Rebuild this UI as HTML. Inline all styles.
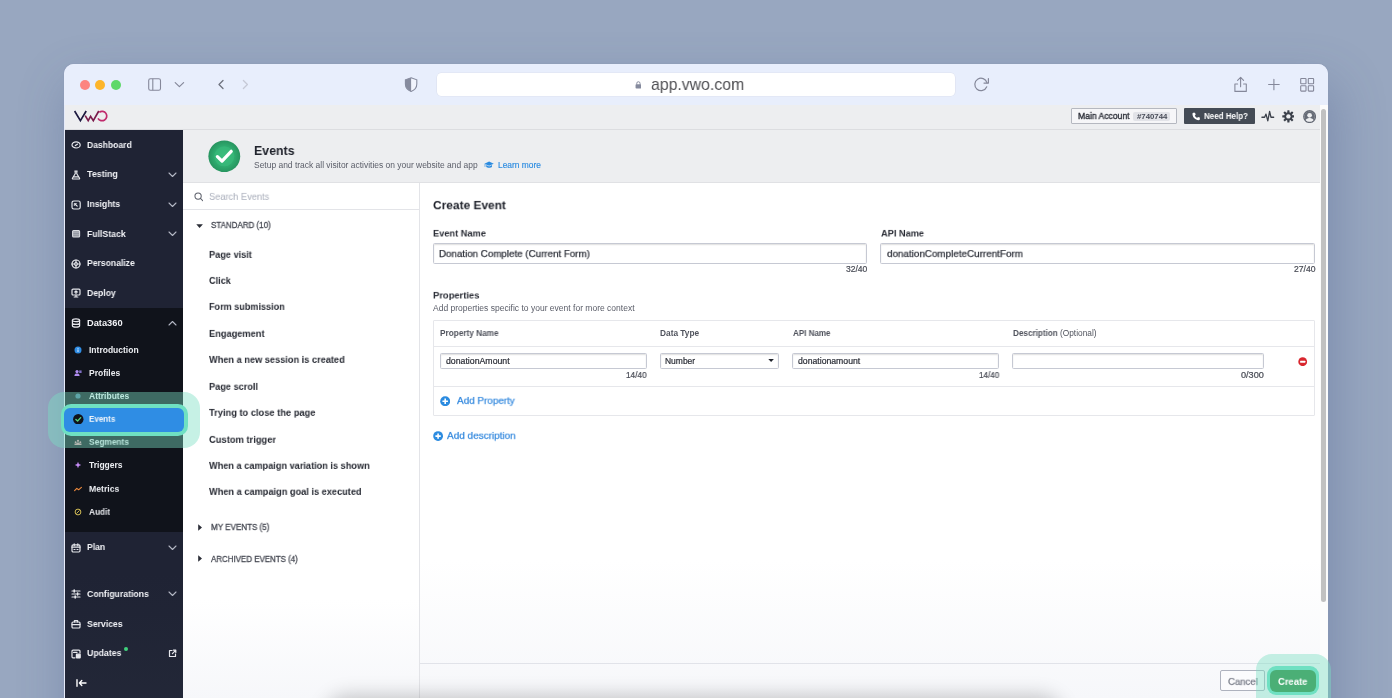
<!DOCTYPE html>
<html>
<head>
<meta charset="utf-8">
<style>
*{box-sizing:border-box;margin:0;padding:0}
html,body{width:1392px;height:698px;overflow:hidden}
body{font-family:"Liberation Sans",sans-serif;background:#98a7c0;position:relative;color:#22252f}
.a{position:absolute}
.t{position:absolute;white-space:nowrap;line-height:1.2;transform-origin:0 0;will-change:transform}
#win{position:absolute;left:64px;top:64px;width:1264px;height:700px;border-radius:10px 10px 0 0;background:#e6ebfa;overflow:hidden;box-shadow:0 0 0 1px rgba(140,150,180,.18),6px 22px 50px 2px rgba(60,80,130,.30)}
.tl{position:absolute;width:11px;height:11px;border-radius:50%}
.box{position:absolute;border:1px solid #c6c9d3;border-radius:1.5px;background:#fff;box-shadow:inset 0 1px 1.5px rgba(0,0,0,.13)}
.ln{position:absolute;background:#e3e4e8}
</style>
</head>
<body>
<div id="win"><div class="a" style="left:0.00px;top:0.00px;width:1264.00px;height:41.00px;background:#e8eefc"></div>
<div class="a" style="left:15.65px;top:15.70px;width:10.30px;height:10.30px;background:#fc8480;border-radius:50%"></div>
<div class="a" style="left:31.15px;top:15.70px;width:10.30px;height:10.30px;background:#fdb52a;border-radius:50%"></div>
<div class="a" style="left:46.75px;top:15.70px;width:10.30px;height:10.30px;background:#5dd868;border-radius:50%"></div>
<svg class="a" style="left:82.00px;top:13.00px" width="16.00" height="15.00" viewBox="0 0 16 15" fill="none" stroke="#85889a" stroke-width="1.1"><rect x="2.7" y="1.8" width="11.8" height="11.5" rx="1.8"/><line x1="6.8" y1="1.8" x2="6.8" y2="13.3"/></svg>
<svg class="a" style="left:109.00px;top:17.00px" width="12.00" height="8.00" viewBox="0 0 12 8" fill="none" stroke="#85889a" stroke-width="1.2" stroke-linecap="round" stroke-linejoin="round"><path d="M2.2 1.6 L6.4 5.6 L10.6 1.6"/></svg>
<svg class="a" style="left:152.00px;top:14.00px" width="8.00" height="13.00" viewBox="0 0 8 13" fill="none" stroke="#6e717d" stroke-width="1.3" stroke-linecap="round" stroke-linejoin="round"><path d="M7 2.5 L3 6.5 L7 10.5"/></svg>
<svg class="a" style="left:178.00px;top:14.00px" width="8.00" height="13.00" viewBox="0 0 8 13" fill="none" stroke="#c6c9d6" stroke-width="1.3" stroke-linecap="round" stroke-linejoin="round"><path d="M1.4 2.5 L5.4 6.5 L1.4 10.5"/></svg>
<svg class="a" style="left:339.00px;top:12.00px" width="16.00" height="17.00" viewBox="0 0 16 17" ><path d="M8.1 1.8 L13.8 3.8 V8 C13.8 11.6 11.2 14.2 8.1 15.4 C5 14.2 2.4 11.6 2.4 8 V3.8 Z" fill="#f1f4fd" stroke="#868b9e" stroke-width="1.1"/><path d="M8.1 1.8 L2.4 3.8 V8 C2.4 11.6 5 14.2 8.1 15.4 Z" fill="#868b9e"/></svg>
<div class="a" style="left:373.00px;top:8.70px;width:517.50px;height:23.40px;background:#fff;border-radius:4.5px;box-shadow:0 0 0 .6px #dde1ef"></div>
<svg class="a" style="left:570.70px;top:17.30px" width="6.80" height="7.70" viewBox="0 0 8 9.5" ><rect x="0.5" y="4" width="7" height="5.2" rx="1" fill="#858a9d"/><path d="M2 4.5 V2.9 A2 2 0 0 1 6 2.9 V4.5" fill="none" stroke="#858a9d" stroke-width="1.2"/></svg>
<svg class="a" style="left:908.00px;top:11.00px" width="19.00" height="19.00" viewBox="0 0 19 19" fill="none" stroke="#85889a" stroke-width="1.2" stroke-linecap="round" stroke-linejoin="round"><path d="M14.75 11.8 A6.2 6.2 0 1 1 15 7.8"/><path d="M16.4 3.5 V8.1 H12"/></svg>
<svg class="a" style="left:1169.00px;top:11.00px" width="16.00" height="19.00" viewBox="0 0 16 19" fill="none" stroke="#85889a" stroke-width="1.1" stroke-linecap="round" stroke-linejoin="round"><path d="M4.6 9 H1.9 V16.4 H13.3 V9 H10.6"/><path d="M7.6 11.8 V2.6"/><path d="M4.6 5.4 L7.6 2.4 L10.6 5.4"/></svg>
<svg class="a" style="left:1204.00px;top:14.00px" width="13.00" height="13.00" viewBox="0 0 13 13" fill="none" stroke="#85889a" stroke-width="1.1" stroke-linecap="round"><path d="M5.9 1.3 V11.8 M0.6 6.5 H11.2"/></svg>
<svg class="a" style="left:1236.00px;top:13.00px" width="15.00" height="15.00" viewBox="0 0 15 15" fill="none" stroke="#85889a" stroke-width="1.1"><rect x=".7" y="1.5" width="5.3" height="5.3" rx=".6"/><rect x="8.3" y="1.5" width="5.3" height="5.3" rx=".6"/><rect x=".7" y="8.8" width="5.3" height="5.3" rx=".6"/><rect x="8.3" y="8.8" width="5.3" height="5.3" rx=".6"/></svg>
<div class="a" style="left:1.00px;top:41.00px;width:1255.00px;height:24.60px;background:#edeef0;border-bottom:1px solid #dcdde0"></div>
<svg class="a" style="left:9.00px;top:46.00px" width="40.00" height="14.00" viewBox="0 0 40 14" fill="none" stroke-width="1.7"><path d="M1.6 1 L7.4 10.6 L13.2 1" stroke="#1e1a40"/><path d="M12.2 5.6 L15.2 10.6 L17.6 6.3 L20.3 10.6 L25.8 1" stroke="#7a1c4c"/><path d="M26.3 2.2 A4.7 4.7 0 1 1 25 8.4" stroke="#c02a6c"/></svg>
<div class="a" style="left:1006.70px;top:44.30px;width:106.60px;height:15.60px;border:1px solid #b5b8c0;background:#f6f6f8;border-radius:1px"></div>
<div class="a" style="left:1069.30px;top:47.60px;width:36.30px;height:9.30px;background:#e2e3e8;border-radius:2px"></div>
<div class="a" style="left:1120.10px;top:44.30px;width:70.80px;height:15.60px;background:#444b55;border-radius:1px"></div>
<svg class="a" style="left:1127.50px;top:48.00px" width="8.30" height="9.00" viewBox="0 0 9 9" ><path d="M1.8 0.5 L3.3 0.5 L4 2.6 L3 3.4 C3.5 4.6 4.4 5.5 5.6 6 L6.4 5 L8.5 5.7 V7.2 C8.5 8 7.9 8.5 7.2 8.5 C3.5 8.3 0.7 5.5 0.5 1.8 C0.5 1.1 1 0.5 1.8 0.5 Z" fill="#fff"/></svg>
<svg class="a" style="left:1197.30px;top:46.20px" width="13.60" height="12.70" viewBox="0 0 15 14" fill="none" stroke="#3c414b" stroke-width="1.4" stroke-linejoin="round" stroke-linecap="round"><path d="M1 8 H4 L5.5 4.5 L7.5 12 L9.5 1.5 L11 8 H14"/></svg>
<svg class="a" style="left:1217.50px;top:46.30px" width="12.80" height="12.80" viewBox="0 0 14 14" ><g fill="#3c414b"><circle cx="7" cy="7" r="4.6"/><rect x="5.8" y="0.3" width="2.4" height="13.4" rx=".4"/><rect x="5.8" y="0.3" width="2.4" height="13.4" rx=".4" transform="rotate(45 7 7)"/><rect x="5.8" y="0.3" width="2.4" height="13.4" rx=".4" transform="rotate(90 7 7)"/><rect x="5.8" y="0.3" width="2.4" height="13.4" rx=".4" transform="rotate(135 7 7)"/></g><circle cx="7" cy="7" r="2.4" fill="#edeef0"/></svg>
<svg class="a" style="left:1238.90px;top:45.70px" width="13.20" height="13.20" viewBox="0 0 14 14" ><circle cx="7" cy="7" r="6.2" fill="#edeef0" stroke="#666b76" stroke-width="1.4"/><clipPath id="uc"><circle cx="7" cy="7" r="5.6"/></clipPath><g clip-path="url(#uc)"><rect x="0" y="0" width="14" height="14" fill="#666b76"/><circle cx="7" cy="5.6" r="2.5" fill="#edeef0"/><path d="M2.5 13 C2.5 9.5 5 8.6 7 8.6 C9 8.6 11.5 9.5 11.5 13 Z" fill="#edeef0"/></g></svg>
<div class="a" style="left:1255.60px;top:41.00px;width:8.40px;height:659.00px;background:#fcfcfc"></div>
<div class="a" style="left:1256.50px;top:44.60px;width:5.50px;height:493.40px;background:#c1c1c1;border-radius:3px"></div>
<div class="a" style="left:1.00px;top:65.60px;width:117.60px;height:634.40px;background:linear-gradient(180deg,#1f2334 0%,#1f2334 70%,#242939 100%)"></div>
<div class="a" style="left:1.00px;top:244.10px;width:117.60px;height:224.30px;background:#10131b"></div>
<svg class="a" style="left:6.80px;top:75.90px" width="10.00" height="10.00" viewBox="0 0 10 10" fill="none" stroke="#e6e7ec" stroke-width="1.2" stroke-linejoin="round" stroke-linecap="round"><ellipse cx="5.1" cy="4.9" rx="4.1" ry="3.1"/><path d="M4.3 5.5 L6.4 4.2" stroke-width="1.3"/></svg>
<svg class="a" style="left:6.80px;top:105.70px" width="10.00" height="10.00" viewBox="0 0 10 10" fill="none" stroke="#e6e7ec" stroke-width="1.2" stroke-linejoin="round" stroke-linecap="round"><path d="M3.8 1 H6.2 M4.2 1 V3.8 L1.4 8.2 A.6 .6 0 0 0 1.9 9 H8.1 A.6 .6 0 0 0 8.6 8.2 L5.8 3.8 V1"/><path d="M2.6 6.8 H7.4" /></svg>
<svg class="a" style="left:103.50px;top:107.80px" width="9.00" height="6.00" viewBox="0 0 9 6" fill="none" stroke="#b3b7c4" stroke-width="1.1" stroke-linecap="round" stroke-linejoin="round"><path d="M1 1 L4.5 4.5 L8 1"/></svg>
<svg class="a" style="left:6.80px;top:135.60px" width="10.00" height="10.00" viewBox="0 0 10 10" fill="none" stroke="#e6e7ec" stroke-width="1.2" stroke-linejoin="round" stroke-linecap="round"><rect x="1" y="1" width="8.2" height="8" rx="1.8"/><path d="M3.8 3.8 L6.2 6.2" /><path d="M3.5 3.5 H5.7 L3.5 5.7 Z" fill="#e6e7ec" stroke-width=".5"/></svg>
<svg class="a" style="left:103.50px;top:137.70px" width="9.00" height="6.00" viewBox="0 0 9 6" fill="none" stroke="#b3b7c4" stroke-width="1.1" stroke-linecap="round" stroke-linejoin="round"><path d="M1 1 L4.5 4.5 L8 1"/></svg>
<svg class="a" style="left:6.80px;top:165.10px" width="10.00" height="10.00" viewBox="0 0 10 10" fill="none" stroke="#e6e7ec" stroke-width="1.2" stroke-linejoin="round" stroke-linecap="round"><rect x="1.6" y="1.6" width="7" height="6.4" rx="1" fill="#8f929d" stroke="#dcdde3" stroke-width="1.1"/><path d="M1.8 3.7 H8.4 M1.8 5.8 H8.4" stroke="#c9cbd3" stroke-width=".6"/></svg>
<svg class="a" style="left:103.50px;top:167.20px" width="9.00" height="6.00" viewBox="0 0 9 6" fill="none" stroke="#b3b7c4" stroke-width="1.1" stroke-linecap="round" stroke-linejoin="round"><path d="M1 1 L4.5 4.5 L8 1"/></svg>
<svg class="a" style="left:6.80px;top:194.60px" width="10.00" height="10.00" viewBox="0 0 10 10" fill="none" stroke="#e6e7ec" stroke-width="1.2" stroke-linejoin="round" stroke-linecap="round"><circle cx="5" cy="5" r="4"/><circle cx="5" cy="5" r="1.3"/><path d="M5 1 V3.5 M5 6.5 V9 M1 5 H3.5 M6.5 5 H9"/></svg>
<svg class="a" style="left:6.80px;top:224.30px" width="10.00" height="10.00" viewBox="0 0 10 10" fill="none" stroke="#e6e7ec" stroke-width="1.2" stroke-linejoin="round" stroke-linecap="round"><rect x="1" y="1.2" width="8" height="5.8" rx="1"/><path d="M5 7 V9 M3.2 9 H6.8 M5 5.4 V3 M3.8 4 L5 2.8 L6.2 4"/></svg>
<svg class="a" style="left:6.80px;top:254.10px" width="10.00" height="10.00" viewBox="0 0 10 10" fill="none" stroke="#e6e7ec" stroke-width="1.2" stroke-linejoin="round" stroke-linecap="round"><ellipse cx="5" cy="2.3" rx="3.6" ry="1.4"/><path d="M1.4 2.3 V7.7 A3.6 1.4 0 0 0 8.6 7.7 V2.3 M1.4 5 A3.6 1.4 0 0 0 8.6 5"/></svg>
<svg class="a" style="left:103.50px;top:256.00px" width="9.00" height="6.00" viewBox="0 0 9 6" fill="none" stroke="#b3b7c4" stroke-width="1.1" stroke-linecap="round" stroke-linejoin="round"><path d="M1 5 L4.5 1.5 L8 5"/></svg>
<svg class="a" style="left:6.80px;top:478.70px" width="10.00" height="10.00" viewBox="0 0 10 10" fill="none" stroke="#e6e7ec" stroke-width="1.2" stroke-linejoin="round" stroke-linecap="round"><rect x="1" y="1.8" width="8" height="7.2" rx="1.2"/><path d="M1 4.2 H9 M3.2 0.8 V2.6 M6.8 0.8 V2.6 M3 6.5 H4 M6 6.5 H7"/></svg>
<svg class="a" style="left:103.50px;top:480.80px" width="9.00" height="6.00" viewBox="0 0 9 6" fill="none" stroke="#b3b7c4" stroke-width="1.1" stroke-linecap="round" stroke-linejoin="round"><path d="M1 1 L4.5 4.5 L8 1"/></svg>
<svg class="a" style="left:6.80px;top:525.20px" width="10.00" height="10.00" viewBox="0 0 10 10" fill="none" stroke="#e6e7ec" stroke-width="1.2" stroke-linejoin="round" stroke-linecap="round"><path d="M1 2 H9 M1 5 H9 M1 8 H9"/><path d="M3.2 1 V3 M6.6 4 V6 M4.2 7 V9" stroke-width="1.6"/></svg>
<svg class="a" style="left:103.50px;top:527.30px" width="9.00" height="6.00" viewBox="0 0 9 6" fill="none" stroke="#b3b7c4" stroke-width="1.1" stroke-linecap="round" stroke-linejoin="round"><path d="M1 1 L4.5 4.5 L8 1"/></svg>
<svg class="a" style="left:6.80px;top:554.90px" width="10.00" height="10.00" viewBox="0 0 10 10" fill="none" stroke="#e6e7ec" stroke-width="1.2" stroke-linejoin="round" stroke-linecap="round"><rect x="1" y="3" width="8" height="6" rx="1"/><path d="M3.4 3 V1.6 H6.6 V3 M1 5.6 H9"/></svg>
<svg class="a" style="left:6.80px;top:584.60px" width="10.00" height="10.00" viewBox="0 0 10 10" fill="none" stroke="#e6e7ec" stroke-width="1.2" stroke-linejoin="round" stroke-linecap="round"><path d="M9 4 V2.2 A1 1 0 0 0 8 1.2 H2 A1 1 0 0 0 1 2.2 V7.8 A1 1 0 0 0 2 8.8 H4"/><rect x="5.4" y="5.2" width="3.8" height="3.8" rx=".4" fill="#e6e7ec"/><path d="M2.6 3.4 H6"/></svg>
<div class="a" style="left:59.90px;top:583.30px;width:4.00px;height:4.00px;background:#3fd17c;border-radius:50%"></div>
<svg class="a" style="left:103.50px;top:585.40px" width="9.00" height="9.00" viewBox="0 0 9 9" fill="none" stroke="#e6e7ec" stroke-width="1.2" stroke-linecap="round" stroke-linejoin="round"><path d="M4 1.5 H1.5 V7.5 H7.5 V5"/><path d="M5.4 1.2 H7.8 V3.6 M7.6 1.4 L4.4 4.6"/></svg>
<svg class="a" style="left:11.50px;top:615.30px" width="11.00" height="8.00" viewBox="0 0 11 8" fill="none" stroke="#fff" stroke-width="1.4" stroke-linecap="round" stroke-linejoin="round"><path d="M1 .8 V7.2 M10 4 H3.6 M5.8 1.6 L3.4 4 L5.8 6.4"/></svg>
<svg class="a" style="left:10.40px;top:281.70px" width="8.00" height="8.00" viewBox="0 0 8 8" ><circle cx="4" cy="4" r="3.5" fill="#2f8de4"/><rect x="3.5" y="3.4" width="1" height="2.6" fill="#dbeafb"/><rect x="3.5" y="1.9" width="1" height="1" fill="#dbeafb"/></svg>
<svg class="a" style="left:10.40px;top:304.90px" width="8.00" height="8.00" viewBox="0 0 8 8" ><circle cx="3" cy="2.6" r="1.6" fill="#b08cf0"/><path d="M.4 7 C.4 5.2 1.6 4.6 3 4.6 C4.4 4.6 5.6 5.2 5.6 7 Z" fill="#b08cf0"/><rect x="5.2" y="1.4" width="2.4" height="2.6" fill="#7f6fc4"/></svg>
<svg class="a" style="left:10.40px;top:328.10px" width="8.00" height="8.00" viewBox="0 0 8 8" ><circle cx="4" cy="4" r="2.6" fill="#5b9fc0" opacity=".75"/></svg>
<svg class="a" style="left:10.40px;top:374.20px" width="8.00" height="8.00" viewBox="0 0 8 8" ><path d="M.5 7 V5.6 H2.5 V4.4 H5.5 V5.6 H7.5 V7 Z" fill="#dc96a2"/><circle cx="1.6" cy="4.2" r=".9" fill="#dc96a2"/><circle cx="4" cy="2.8" r="1.1" fill="#dc96a2"/><circle cx="6.4" cy="4.2" r=".9" fill="#dc96a2"/></svg>
<svg class="a" style="left:10.40px;top:396.90px" width="8.00" height="8.00" viewBox="0 0 8 8" ><path d="M4 .8 L4.9 3.1 L7.2 4 L4.9 4.9 L4 7.2 L3.1 4.9 L.8 4 L3.1 3.1 Z" fill="#c48bf4"/></svg>
<svg class="a" style="left:10.40px;top:420.60px" width="8.00" height="8.00" viewBox="0 0 8 8" ><path d="M.6 5.6 L2.8 3.4 L4.6 4.8 L7.4 2.4" fill="none" stroke="#f08a3c" stroke-width="1.1" stroke-linecap="round" stroke-linejoin="round"/></svg>
<svg class="a" style="left:10.40px;top:443.80px" width="8.00" height="8.00" viewBox="0 0 8 8" ><circle cx="4" cy="4" r="2.9" fill="none" stroke="#d2bc55" stroke-width="1"/><path d="M2.4 5.6 L5.6 2.4" stroke="#d2bc55" stroke-width=".9"/></svg>
<div class="a" style="left:118.60px;top:66.00px;width:1137.00px;height:52.60px;background:#edeef0;border-bottom:1px solid #e0e1e4"></div>
<svg class="a" style="left:144.30px;top:75.60px" width="32.60" height="32.60" viewBox="0 0 34 34" ><defs><radialGradient id="eg" cx="50%" cy="50%" r="50%"><stop offset="0" stop-color="#39bd7c"/><stop offset=".55" stop-color="#30b072"/><stop offset="1" stop-color="#27945f"/></radialGradient></defs><circle cx="17" cy="17" r="16.6" fill="url(#eg)"/><circle cx="17" cy="17" r="10.5" fill="#3cbd7d" opacity=".5"/><path d="M9.8 17.4 L14.6 22 L24.2 11.8" fill="none" stroke="#fff" stroke-width="3.4" stroke-linejoin="round" stroke-linecap="round"/></svg>
<svg class="a" style="left:419.80px;top:96.90px" width="10.20" height="7.70" viewBox="0 0 11 8.4" ><path d="M5.5 .6 L10.6 2.9 L5.5 5.2 L.4 2.9 Z" fill="#2b8be0"/><path d="M2.4 4.4 V6.6 C3.4 7.8 7.6 7.8 8.6 6.6 V4.4 L5.5 5.9 Z" fill="#2b8be0"/><path d="M1 3.2 V6.4" stroke="#2b8be0" stroke-width=".7"/></svg>
<div class="a" style="left:118.60px;top:118.60px;width:1137.00px;height:581.40px;background:#fff"></div>
<div class="a" style="left:354.60px;top:118.60px;width:1.00px;height:581.40px;background:#e3e4e8"></div>
<div class="a" style="left:118.60px;top:145.20px;width:236.00px;height:1.00px;background:#e3e4e8"></div>
<svg class="a" style="left:129.70px;top:128.00px" width="9.50" height="9.50" viewBox="0 0 10 10" fill="none" stroke="#5d606b" stroke-width="1.1" stroke-linecap="round"><circle cx="4.3" cy="4.3" r="3.3"/><path d="M6.8 6.8 L9.2 9.2"/></svg>
<svg class="a" style="left:132.20px;top:159.60px" width="7.20" height="4.10" viewBox="0 0 8 4.6" ><path d="M.3 .2 H7.7 L4 4.4 Z" fill="#2a2d36"/></svg>
<svg class="a" style="left:133.50px;top:459.80px" width="4.20" height="7.00" viewBox="0 0 4.2 7" ><path d="M.2 .2 V6.8 L4 3.5 Z" fill="#2a2d36"/></svg>
<svg class="a" style="left:133.50px;top:491.20px" width="4.20" height="7.00" viewBox="0 0 4.2 7" ><path d="M.2 .2 V6.8 L4 3.5 Z" fill="#2a2d36"/></svg>
<div class="a" style="left:355.60px;top:496.00px;width:900.00px;height:140.00px;background:linear-gradient(180deg,rgba(246,247,250,0) 0%,#f6f7fa 100%)"></div>
<div class="a" style="left:118.60px;top:536.00px;width:236.00px;height:100.00px;background:linear-gradient(180deg,rgba(246,247,250,0) 0%,#f6f7fa 100%)"></div>
<div class="box" style="left:368.60px;top:178.50px;width:434.30px;height:21.00px;"></div>
<div class="box" style="left:816.10px;top:178.50px;width:434.80px;height:21.00px;"></div>
<div class="a" style="left:368.60px;top:256.00px;width:882.30px;height:95.60px;border:1px solid #e6e7eb;border-radius:1px"></div>
<div class="a" style="left:368.60px;top:282.00px;width:882.30px;height:1.00px;background:#e6e7eb"></div>
<div class="a" style="left:368.60px;top:322.40px;width:882.30px;height:1.00px;background:#e6e7eb"></div>
<div class="box" style="left:376.00px;top:289.30px;width:206.90px;height:15.40px;"></div>
<div class="box" style="left:596.10px;top:289.30px;width:118.50px;height:15.40px;"></div>
<svg class="a" style="left:704.00px;top:295.20px" width="6.20" height="3.00" viewBox="0 0 7 3.6" ><path d="M.2 .1 H6.8 L3.5 3.5 Z" fill="#1f222b"/></svg>
<div class="box" style="left:728.20px;top:289.30px;width:206.80px;height:15.40px;"></div>
<div class="box" style="left:948.40px;top:289.30px;width:251.40px;height:15.40px;"></div>
<svg class="a" style="left:1234.40px;top:292.50px" width="9.40" height="9.40" viewBox="0 0 10 10" ><circle cx="5" cy="5" r="4.7" fill="#d9262e"/><rect x="2.2" y="4" width="5.6" height="2" rx=".4" fill="#fff"/></svg>
<svg class="a" style="left:376.10px;top:331.80px" width="10.40" height="10.40" viewBox="0 0 11 11" ><circle cx="5.5" cy="5.5" r="5.3" fill="#2b8be0"/><path d="M5.5 2.6 V8.4 M2.6 5.5 H8.4" stroke="#fff" stroke-width="1.7"/></svg>
<svg class="a" style="left:368.90px;top:366.70px" width="10.20" height="10.20" viewBox="0 0 11 11" ><circle cx="5.5" cy="5.5" r="5.3" fill="#2b8be0"/><path d="M5.5 2.6 V8.4 M2.6 5.5 H8.4" stroke="#fff" stroke-width="1.7"/></svg>
<div class="a" style="left:355.60px;top:599.00px;width:900.00px;height:1.00px;background:#e1e3e9"></div>
<div class="a" style="left:1156.20px;top:606.00px;width:44.50px;height:21.30px;border:1px solid #aeb2be;border-radius:2px;background:#fbfbfd"></div>
<div class="a" style="left:274.00px;top:644.00px;width:712.00px;height:22.00px;box-shadow:0 0 20px 12px rgba(0,0,0,.22);border-radius:10px"></div>
<div id="t0" class="t" style="left:587.05px;top:11.40px;font-size:17px;font-weight:normal;color:#505054;transform:scale(0.9312,1);">app.vwo.com</div>
<div id="t1" class="t" style="left:1013.97px;top:47.40px;font-size:8.8px;font-weight:normal;color:#2c2f38;transform:scale(0.9761,1);-webkit-text-stroke:.35px #2c2f38;">Main Account</div>
<div id="t2" class="t" style="left:1072.58px;top:49.00px;font-size:7.2px;font-weight:bold;color:#474b57;transform:scale(1.0859,1);">#740744</div>
<div id="t3" class="t" style="left:1139.87px;top:47.40px;font-size:8.8px;font-weight:bold;color:#fff;transform:scale(0.9080,1);">Need Help?</div>
<div id="t4" class="t" style="left:22.67px;top:75.68px;font-size:9.2px;font-weight:bold;color:#f2f3f7;transform:scale(0.9306,1.04);">Dashboard</div>
<div id="t5" class="t" style="left:22.67px;top:105.48px;font-size:9.2px;font-weight:bold;color:#f2f3f7;transform:scale(0.9677,1.04);">Testing</div>
<div id="t6" class="t" style="left:22.67px;top:135.38px;font-size:9.2px;font-weight:bold;color:#f2f3f7;transform:scale(0.9442,1.04);">Insights</div>
<div id="t7" class="t" style="left:22.67px;top:164.88px;font-size:9.2px;font-weight:bold;color:#f2f3f7;transform:scale(0.9464,1.04);">FullStack</div>
<div id="t8" class="t" style="left:22.67px;top:194.38px;font-size:9.2px;font-weight:bold;color:#f2f3f7;transform:scale(0.9352,1.04);">Personalize</div>
<div id="t9" class="t" style="left:22.67px;top:224.08px;font-size:9.2px;font-weight:bold;color:#f2f3f7;transform:scale(0.9389,1.04);">Deploy</div>
<div id="t10" class="t" style="left:22.67px;top:253.88px;font-size:9.2px;font-weight:bold;color:#f2f3f7;transform:scale(1.0090,1.04);">Data360</div>
<div id="t11" class="t" style="left:22.67px;top:478.48px;font-size:9.2px;font-weight:bold;color:#f2f3f7;transform:scale(0.9310,1.04);">Plan</div>
<div id="t12" class="t" style="left:22.67px;top:524.98px;font-size:9.2px;font-weight:bold;color:#f2f3f7;transform:scale(0.9470,1.04);">Configurations</div>
<div id="t13" class="t" style="left:22.67px;top:554.68px;font-size:9.2px;font-weight:bold;color:#f2f3f7;transform:scale(0.9406,1.04);">Services</div>
<div id="t14" class="t" style="left:22.67px;top:584.38px;font-size:9.2px;font-weight:bold;color:#f2f3f7;transform:scale(0.9481,1.04);">Updates</div>
<div id="t15" class="t" style="left:24.87px;top:280.84px;font-size:8.5px;font-weight:bold;color:#eceef2;transform:scale(0.9952,0.97);">Introduction</div>
<div id="t16" class="t" style="left:24.87px;top:304.04px;font-size:8.5px;font-weight:bold;color:#eceef2;transform:scale(0.9889,0.97);">Profiles</div>
<div id="t17" class="t" style="left:24.87px;top:327.24px;font-size:8.5px;font-weight:bold;color:#eceef2;transform:scale(0.9950,0.97);">Attributes</div>
<div id="t18" class="t" style="left:24.87px;top:373.34px;font-size:8.5px;font-weight:bold;color:#eceef2;transform:scale(0.9831,0.97);">Segments</div>
<div id="t19" class="t" style="left:25.27px;top:396.04px;font-size:8.5px;font-weight:bold;color:#eceef2;transform:scale(0.9879,0.97);">Triggers</div>
<div id="t20" class="t" style="left:24.87px;top:419.74px;font-size:8.5px;font-weight:bold;color:#eceef2;transform:scale(1.0227,0.97);">Metrics</div>
<div id="t21" class="t" style="left:24.87px;top:442.94px;font-size:8.5px;font-weight:bold;color:#eceef2;transform:scale(0.9687,0.97);">Audit</div>
<div id="t22" class="t" style="left:190.01px;top:78.65px;font-size:13.2px;font-weight:bold;color:#20232c;transform:scale(0.9359,1);">Events</div>
<div id="t23" class="t" style="left:189.67px;top:95.70px;font-size:8.4px;font-weight:normal;color:#5a5d68;transform:scale(1.0092,1);">Setup and track all visitor activities on your website and app</div>
<div id="t24" class="t" style="left:433.87px;top:95.70px;font-size:8.4px;font-weight:normal;color:#2b8be0;transform:scale(1.0002,1);-webkit-text-stroke:.15px #2b8be0;">Learn more</div>
<div id="t25" class="t" style="left:144.87px;top:128.07px;font-size:10px;font-weight:normal;color:#a8adba;transform:scale(0.9255,0.87);">Search Events</div>
<div id="t26" class="t" style="left:146.58px;top:157.30px;font-size:8.3px;font-weight:normal;color:#474a54;transform:scale(0.9620,1);-webkit-text-stroke:.3px #474a54;">STANDARD (10)</div>
<div id="t27" class="t" style="left:144.87px;top:185.67px;font-size:10px;font-weight:bold;color:#272a33;transform:scale(0.9186,0.87);">Page visit</div>
<div id="t28" class="t" style="left:144.87px;top:212.07px;font-size:10px;font-weight:bold;color:#272a33;transform:scale(0.9161,0.87);">Click</div>
<div id="t29" class="t" style="left:144.87px;top:238.37px;font-size:10px;font-weight:bold;color:#272a33;transform:scale(0.9081,0.87);">Form submission</div>
<div id="t30" class="t" style="left:144.87px;top:264.87px;font-size:10px;font-weight:bold;color:#272a33;transform:scale(0.9248,0.87);">Engagement</div>
<div id="t31" class="t" style="left:144.87px;top:291.27px;font-size:10px;font-weight:bold;color:#272a33;transform:scale(0.9214,0.87);">When a new session is created</div>
<div id="t32" class="t" style="left:144.87px;top:317.67px;font-size:10px;font-weight:bold;color:#272a33;transform:scale(0.9183,0.87);">Page scroll</div>
<div id="t33" class="t" style="left:144.87px;top:343.87px;font-size:10px;font-weight:bold;color:#272a33;transform:scale(0.9295,0.87);">Trying to close the page</div>
<div id="t34" class="t" style="left:144.87px;top:370.57px;font-size:10px;font-weight:bold;color:#272a33;transform:scale(0.9362,0.87);">Custom trigger</div>
<div id="t35" class="t" style="left:144.87px;top:396.97px;font-size:10px;font-weight:bold;color:#272a33;transform:scale(0.9180,0.87);">When a campaign variation is shown</div>
<div id="t36" class="t" style="left:144.87px;top:423.17px;font-size:10px;font-weight:bold;color:#272a33;transform:scale(0.9214,0.87);">When a campaign goal is executed</div>
<div id="t37" class="t" style="left:146.58px;top:459.30px;font-size:8.3px;font-weight:normal;color:#474a54;transform:scale(0.9698,1);-webkit-text-stroke:.3px #474a54;">MY EVENTS (5)</div>
<div id="t38" class="t" style="left:146.58px;top:490.90px;font-size:8.3px;font-weight:normal;color:#474a54;transform:scale(0.9560,1);-webkit-text-stroke:.3px #474a54;">ARCHIVED EVENTS (4)</div>
<div id="t39" class="t" style="left:368.76px;top:134.77px;font-size:12px;font-weight:bold;color:#20232c;transform:scale(0.9933,0.93);">Create Event</div>
<div id="t40" class="t" style="left:368.77px;top:164.73px;font-size:10px;font-weight:bold;color:#272a33;transform:scale(0.9240,0.83);">Event Name</div>
<div id="t41" class="t" style="left:374.77px;top:184.89px;font-size:10.2px;font-weight:normal;color:#2a2d36;transform:scale(0.9587,0.89);-webkit-text-stroke:.25px #2a2d36;">Donation Complete (Current Form)</div>
<div id="t42" class="t" style="left:781.68px;top:201.10px;font-size:8.3px;font-weight:normal;color:#484b55;transform:scale(1.0273,1);-webkit-text-stroke:.2px #484b55;">32/40</div>
<div id="t43" class="t" style="left:816.67px;top:164.63px;font-size:10px;font-weight:bold;color:#272a33;transform:scale(0.9210,0.83);">API Name</div>
<div id="t44" class="t" style="left:822.57px;top:184.69px;font-size:10.2px;font-weight:normal;color:#2a2d36;transform:scale(0.9677,0.89);-webkit-text-stroke:.25px #2a2d36;">donationCompleteCurrentForm</div>
<div id="t45" class="t" style="left:1229.58px;top:200.60px;font-size:8.3px;font-weight:normal;color:#484b55;transform:scale(1.0321,1);-webkit-text-stroke:.2px #484b55;">27/40</div>
<div id="t46" class="t" style="left:368.77px;top:226.93px;font-size:10px;font-weight:bold;color:#272a33;transform:scale(0.9380,0.83);">Properties</div>
<div id="t47" class="t" style="left:368.78px;top:240.40px;font-size:8.3px;font-weight:normal;color:#5a5d68;transform:scale(1.0258,1);">Add properties specific to your event for more context</div>
<div id="t48" class="t" style="left:376.18px;top:265.40px;font-size:8.3px;font-weight:bold;color:#50535d;transform:scale(0.9898,1);">Property Name</div>
<div id="t49" class="t" style="left:596.28px;top:265.40px;font-size:8.3px;font-weight:bold;color:#50535d;transform:scale(1.0022,1);">Data Type</div>
<div id="t50" class="t" style="left:728.58px;top:265.40px;font-size:8.3px;font-weight:bold;color:#50535d;transform:scale(0.9664,1);">API Name</div>
<div id="t51" class="t" style="left:948.58px;top:265.40px;font-size:8.3px;font-weight:bold;color:#50535d;transform:scale(0.9819,1);">Description</div>
<div id="t52" class="t" style="left:995.98px;top:265.40px;font-size:8.3px;font-weight:normal;color:#50535d;transform:scale(1.0026,1);">(Optional)</div>
<div id="t53" class="t" style="left:381.67px;top:292.00px;font-size:8.4px;font-weight:normal;color:#2a2d36;transform:scale(1.0432,1);-webkit-text-stroke:.2px #2a2d36;">donationAmount</div>
<div id="t54" class="t" style="left:600.97px;top:291.60px;font-size:8.4px;font-weight:normal;color:#2a2d36;transform:scale(1.0114,1);-webkit-text-stroke:.2px #2a2d36;">Number</div>
<div id="t55" class="t" style="left:734.27px;top:292.00px;font-size:8.4px;font-weight:normal;color:#2a2d36;transform:scale(1.0359,1);-webkit-text-stroke:.2px #2a2d36;">donationamount</div>
<div id="t56" class="t" style="left:562.38px;top:307.10px;font-size:8.3px;font-weight:normal;color:#484b55;transform:scale(0.9887,1);-webkit-text-stroke:.2px #484b55;">14/40</div>
<div id="t57" class="t" style="left:914.98px;top:307.10px;font-size:8.3px;font-weight:normal;color:#484b55;transform:scale(0.9695,1);-webkit-text-stroke:.2px #484b55;">14/40</div>
<div id="t58" class="t" style="left:1177.18px;top:306.90px;font-size:8.3px;font-weight:normal;color:#484b55;transform:scale(1.0995,1);-webkit-text-stroke:.2px #484b55;">0/300</div>
<div id="t59" class="t" style="left:393.27px;top:332.27px;font-size:10px;font-weight:normal;color:#3489de;transform:scale(0.9901,0.87);-webkit-text-stroke:.25px #3489de;">Add Property</div>
<div id="t60" class="t" style="left:382.87px;top:367.27px;font-size:10px;font-weight:normal;color:#3489de;transform:scale(0.9966,0.87);-webkit-text-stroke:.25px #3489de;">Add description</div>
<div id="t61" class="t" style="left:1163.57px;top:612.67px;font-size:10px;font-weight:normal;color:#747884;transform:scale(0.9569,0.87);-webkit-text-stroke:.25px #747884;">Cancel</div></div>
<div class="a" style="left:48.00px;top:391.80px;width:152.20px;height:56.20px;border-radius:16px;background:rgba(122,222,195,.43)"></div>
<div class="a" style="left:60.50px;top:404.40px;width:127.50px;height:31.80px;border-radius:10px;background:#6fe0c2"></div>
<div class="a" style="left:64.10px;top:408.10px;width:120.10px;height:23.90px;border-radius:6px;background:#2f8de4"></div>
<svg class="a" style="left:73.3px;top:413.8px" width="10.6" height="10.6" viewBox="0 0 11 11"><circle cx="5.5" cy="5.5" r="5.4" fill="#10131b"/><path d="M3 5.6 L4.8 7.3 L8 3.8" fill="none" stroke="#56d07e" stroke-width="1.4" stroke-linecap="round" stroke-linejoin="round"/></svg>
<div class="a" style="left:1255.80px;top:654.10px;width:75.70px;height:65.90px;border-radius:16px;background:rgba(122,222,195,.43)"></div>
<div class="a" style="left:1266.80px;top:666.10px;width:52.40px;height:29.30px;border-radius:9px;background:#6fe0c2"></div>
<div class="a" style="left:1269.90px;top:669.60px;width:46.10px;height:22.70px;border-radius:6px;background:#4baf76"></div>
<div id="t62" class="t" style="left:89.27px;top:414.14px;font-size:8.5px;font-weight:bold;color:#f4f7fb;transform:scale(0.9413,0.97);">Events</div>
<div id="t63" class="t" style="left:1278.27px;top:676.67px;font-size:10px;font-weight:bold;color:#fff;transform:scale(0.9441,0.87);">Create</div>
</body>
</html>
